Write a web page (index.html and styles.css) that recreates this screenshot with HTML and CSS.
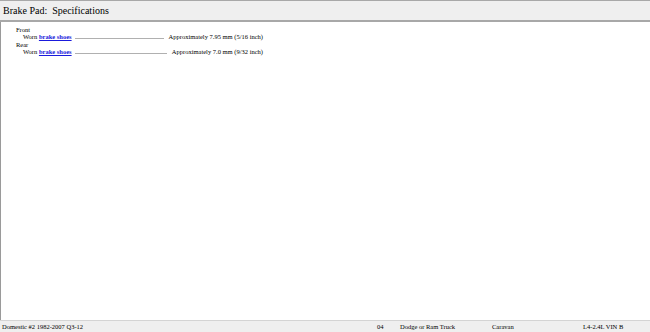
FILE: index.html
```html
<!DOCTYPE html>
<html lang="en">
<head>
    <meta charset="UTF-8">
    <title>Brake Pad: Specifications</title>
    <link rel="stylesheet" href="styles.css">
</head>
<body>
  <div class="page">
    <header class="title-bar">
      <h1>Brake Pad:&nbsp; Specifications</h1>
    </header>

    <div class="content">
      <div class="group">
        <div class="group-name">Front</div>
        <div class="spec-row">
          <span class="spec-label">Worn <a href="#" class="term">brake shoes</a></span>
          <span class="leader"></span>
          <span class="spec-value">Approximately 7.95 mm (5/16 inch)</span>
        </div>
      </div>
      <div class="group">
        <div class="group-name">Rear</div>
        <div class="spec-row">
          <span class="spec-label">Worn <a href="#" class="term">brake shoes</a></span>
          <span class="leader"></span>
          <span class="spec-value">Approximately 7.0 mm (9/32 inch)</span>
        </div>
      </div>
    </div>

    <footer class="status-bar">
      <div class="cell cell-db">Domestic #2 1982-2007 Q3-12</div>
      <div class="cell cell-year">04</div>
      <div class="cell cell-make">Dodge or Ram Truck</div>
      <div class="cell cell-model">Caravan</div>
      <div class="cell cell-engine">L4-2.4L VIN B</div>
    </footer>
  </div>
</body>
</html>
```

FILE: styles.css
```css
/* General */
html, body {
    height: 100%;
}

body {
    margin: 0;
    font-family: 'Liberation Serif', 'Times New Roman', serif;
    color: #000;
    background: #fff;
}

.page {
    display: flex;
    flex-direction: column;
    height: 100%;
}

/* Title bar */
.title-bar {
    background-color: #efefef;
    border-top: 1px solid #a8a8a8;
    border-bottom: 2px solid #a8a8a8;
    height: 19px;
    padding: 0 3px;
}

.title-bar h1 {
    margin: 0;
    font-size: 10px;
    font-weight: normal;
    line-height: 20px;
}

/* Content */
.content {
    flex: 1;
    border-left: 1px solid #9a9a9a;
    padding: 4px 0 0 15px;
    font-size: 6.5px;
    line-height: 7.4px;
}

.spec-row {
    display: flex;
    align-items: baseline;
    width: 240px;
    padding-left: 7px;
}

.group + .group .group-name {
    margin-top: 0;
}

.term {
    color: #1a1adc;
    font-weight: bold;
}

.leader {
    flex: 1;
    border-bottom: 1px solid #b0b0b0;
    margin: 0 5px 0 3px;
}

/* Status bar */
.status-bar {
    display: flex;
    background-color: #efefef;
    border-top: 1px solid #d4d4d4;
    height: 11px;
    font-size: 6.5px;
    line-height: 11px;
}

.cell {
    padding-left: 2px;
    white-space: nowrap;
}

.cell-db {
    width: 373px;
}

.cell-year {
    width: 21px;
}

.cell-make {
    width: 90px;
}

.cell-model {
    width: 89px;
}

.cell-engine {
    flex: 1;
}
```
